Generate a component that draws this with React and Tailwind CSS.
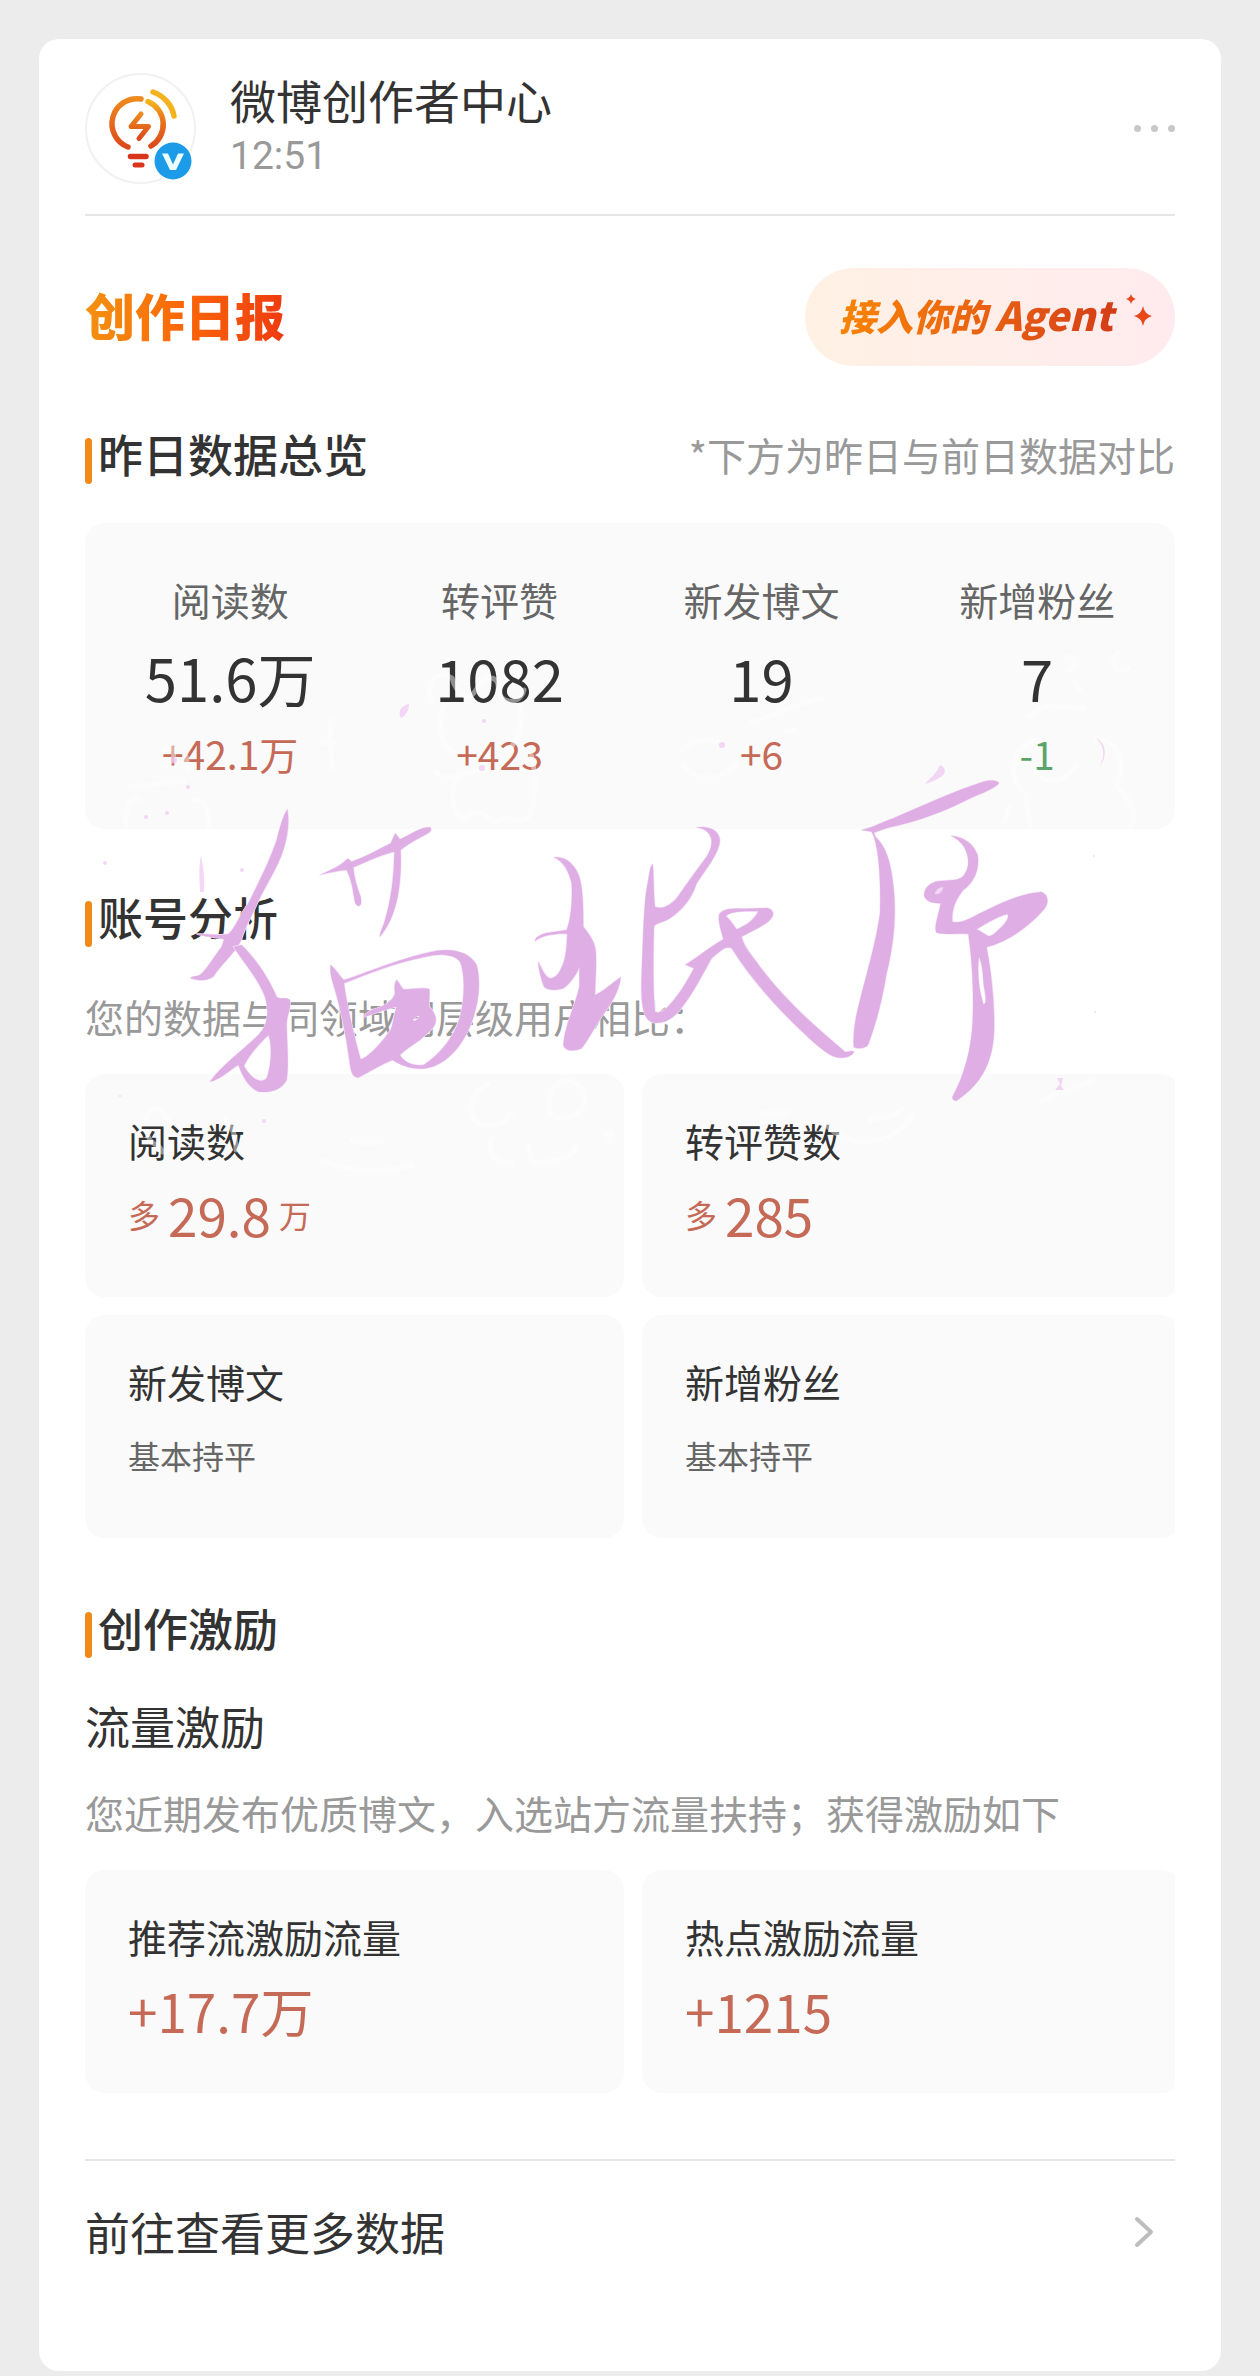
const STATS = [
  { label: "阅读数", value: "51.6万", change: "+42.1万", up: true },
  { label: "转评赞", value: "1082", change: "+423", up: true },
  { label: "新发博文", value: "19", change: "+6", up: true },
  { label: "新增粉丝", value: "7", change: "-1", up: false },
];

const COMPARISONS = [
  { label: "阅读数", prefix: "多", value: "29.8", unit: "万" },
  { label: "转评赞数", prefix: "多", value: "285" },
  { label: "新发博文", note: "基本持平" },
  { label: "新增粉丝", note: "基本持平" },
];

const REWARDS = [
  { label: "推荐流激励流量", value: "+17.7万" },
  { label: "热点激励流量", value: "+1215" },
];

function Avatar() {
  return (
    <svg viewBox="0 0 111 111" className="size-[111px] shrink-0" aria-hidden="true">
      <defs>
        <linearGradient id="bulb" x1="0" y1="0" x2="0" y2="1">
          <stop offset="0" stopColor="#ee8a1e" />
          <stop offset="1" stopColor="#dc4a1c" />
        </linearGradient>
        <linearGradient id="bulbRight" x1="0" y1="0" x2="0" y2="1">
          <stop offset="0" stopColor="#f5b41c" />
          <stop offset="0.35" stopColor="#ea7a1c" />
          <stop offset="1" stopColor="#dc4a1c" />
        </linearGradient>
      </defs>
      <circle cx="55.5" cy="55.5" r="54.5" fill="#fff" stroke="#f1f1f1" strokeWidth="2" />
      <g fill="none" strokeLinecap="round" strokeLinejoin="round">
        <path d="M56 26 A25 25 0 0 0 43 74" stroke="url(#bulb)" strokeWidth="5.5" />
        <path d="M63 28.500 A25 25 0 0 1 66 73" stroke="url(#bulbRight)" strokeWidth="5.5" />
        <path d="M68 19 C79 23 87 32 89 43" stroke="#f3b320" strokeWidth="5.5" />
        <path d="M56 41 L46 53.500 H63.500 L54 65.500" stroke="url(#bulb)" strokeWidth="5" />
        <path d="M45.500 83.500 H61" stroke="#d9341c" strokeWidth="5.5" />
        <path d="M50 92 H57" stroke="#d9341c" strokeWidth="5" />
      </g>
      <circle cx="88" cy="88" r="20.5" fill="#fff" />
      <circle cx="88" cy="88" r="18.500" fill="#1b9be8" />
      <path d="M77 80.500 H83 L88 91.500 L93 80.500 H99 L91 97 H85Z" fill="#eafcff" />
    </svg>
  );
}

function SectionHeading({ children }) {
  return (
    <div className="flex items-start gap-1.5">
      <span className="mt-3 h-[46px] w-[7px] rounded-full bg-[#f08a1a]" />
      <h2 className="text-[45px] leading-[56px] font-medium">{children}</h2>
    </div>
  );
}

function CardGrid({ children }) {
  return (
    <div className="mt-[30px] overflow-hidden">
      <div className="-mr-1.5 grid grid-cols-2 gap-[18px]">{children}</div>
    </div>
  );
}

function InfoCard({ label, prefix, value, unit, note }) {
  return (
    <div className="rounded-[20px] bg-[#fafafa] px-[43px] pt-10 pb-[35px]">
      <h3 className="text-[39px] leading-[52px]">{label}</h3>
      <p className="flex h-24 items-center gap-2 text-[32px] text-[#c66a58]">
        {prefix && <span>{prefix}</span>}
        {value && <span className="text-[53px] leading-[96px]">{value}</span>}
        {unit && <span>{unit}</span>}
        {note && <span className="text-[#666]">{note}</span>}
      </p>
    </div>
  );
}

function BrushSignature() {
  return (
    <svg
      viewBox="0 640 1260 560"
      className="pointer-events-none absolute top-[640px] left-0 w-full"
      aria-hidden="true"
    >
      {/* pale doodles */}
      <g fill="none" stroke="#fff" strokeOpacity="0.45" strokeWidth="5" strokeLinecap="round" strokeLinejoin="round">
        <path d="M432 704 C424 684 436 668 452 678 C456 692 468 704 476 690 C486 672 500 676 498 690 C500 704 520 706 524 690" />
        <path d="M444 706 C436 728 444 750 454 752 M520 706 C524 724 516 744 508 750 M436 772 C446 786 472 768 486 770 M456 776 C448 800 456 822 466 818 C478 806 488 816 494 822 C510 812 522 828 530 814 C538 796 534 760 530 752" />
        <path d="M164 750 C176 738 178 764 164 766 M186 756 L188 768 M320 744 L334 742 M330 720 L332 768" />
        <path d="M126 828 C124 808 130 796 140 800 M208 828 C212 806 200 798 192 800 M130 786 L184 782" />
        <path d="M680 752 C692 738 712 738 722 742 M684 766 C700 786 728 776 736 764 M752 722 C772 716 790 706 822 698 M786 732 L794 730" />
        <path d="M1030 716 L1044 706 L1084 708 M1034 740 C1008 752 1008 780 1026 794 L1030 826 M1032 764 C1044 790 1064 782 1076 766 M1096 738 C1124 742 1124 768 1116 786 C1136 804 1136 820 1130 828" />
        <path d="M1064 656 C1078 656 1078 668 1068 670 M1072 680 L1080 690 M1118 652 C1108 660 1116 676 1128 668 M1010 806 L1004 822" />
        <path d="M144 1120 C150 1108 158 1104 164 1114 L170 1122 M148 1136 C152 1148 160 1142 162 1152 M226 1120 C232 1128 236 1134 236 1150" />
        <path d="M322 1160 C346 1172 380 1172 412 1166 M352 1140 C360 1144 372 1144 382 1142" />
        <path d="M488 1084 C468 1094 466 1118 480 1124 C496 1128 506 1122 512 1112 M552 1090 C544 1112 550 1120 566 1118 C584 1116 590 1096 580 1086 C570 1078 560 1078 552 1090" />
        <path d="M492 1138 C486 1154 496 1164 512 1162 M528 1146 L532 1162 C552 1162 572 1160 576 1146 M608 1144 C614 1134 612 1128 606 1134" />
        <path d="M762 1112 C772 1114 782 1114 788 1112 M824 1122 C846 1152 894 1146 912 1116 M870 1120 C884 1120 894 1116 902 1108 M1042 1102 C1060 1088 1078 1090 1092 1080" />
      </g>
      {/* stray pink flecks */}
      <g fill="#eec6f0" fillOpacity="0.7">
        <path d="M401 718 C397 710 402 706 409 704 C409 710 406 716 401 718Z" />
        <path d="M201 855 C198 870 200 882 200 892 L204 892 C205 876 203 866 201 855Z" />
        <path d="M1096 738 C1108 744 1106 758 1100 766 C1104 756 1106 748 1096 738Z" />
        <path d="M1057 1078 L1063 1078 L1061 1086 L1064 1090 L1055 1090 L1060 1084Z" />
        <path d="M925 784 C930 778 936 774 940 765 C945 767 947 772 942 776 C937 780 931 782 925 784Z" />
        <circle cx="174" cy="760" r="3" />
        <circle cx="484" cy="721" r="2" />
        <circle cx="482" cy="768" r="3" />
        <circle cx="722" cy="745" r="3" />
        <circle cx="146" cy="817" r="2" />
        <circle cx="167" cy="813" r="2" />
        <circle cx="188" cy="787" r="2" />
        <circle cx="105" cy="863" r="2" />
        <circle cx="242" cy="870" r="2" />
        <circle cx="1094" cy="856" r="1" />
        <circle cx="1095" cy="1012" r="1" />
        <circle cx="264" cy="1121" r="2" />
        <circle cx="120" cy="1096" r="1" />
      </g>
      {/* brush strokes */}
      <g fill="#dfaee5" fillRule="evenodd" stroke="#f6e4f8" strokeWidth="4" paintOrder="stroke" strokeLinejoin="round">
        <g transform="translate(170 780) scale(0.33333)">
          <path d="M352 88 C360 130 350 180 340 210 C325 260 290 310 262 370 C245 410 225 440 214 480 C195 520 160 545 130 590 C110 603 85 603 62 595 C60 590 75 590 88 586 C110 570 125 540 155 500 L162 478 C130 470 100 470 80 462 C110 460 150 468 175 462 C200 440 210 400 235 370 C270 300 300 240 320 180 C330 140 340 105 352 88Z" />
          <path d="M190 500 C230 560 260 590 285 650 C300 700 290 740 265 765 C220 810 160 850 120 905 C150 900 180 870 205 855 C215 880 230 920 265 935 C300 940 335 930 350 900 C358 850 350 780 350 730 C352 700 365 680 360 660 C350 650 330 660 320 650 C290 580 250 530 215 495Z M222 858 C240 820 270 790 295 765 C306 790 306 850 290 895 C270 915 240 890 222 858Z" />
          <path d="M450 285 C480 270 510 260 528 240 L535 236 L545 245 C590 230 630 205 662 190 L676 160 L690 178 C720 165 750 140 780 142 C788 150 780 158 765 165 C740 178 710 195 692 210 C694 250 692 300 685 340 C675 400 655 440 630 470 C628 460 640 440 645 420 C660 370 672 300 673 215 C630 225 580 250 550 262 C552 290 560 320 572 350 C576 370 572 378 565 378 C555 375 553 360 552 350 C548 320 540 290 530 270 C500 272 470 280 450 285Z" />
          <path d="M482 555 C500 570 510 590 522 600 C600 575 700 530 800 512 C860 505 900 520 920 555 C935 610 925 680 900 740 C870 810 820 860 760 866 C720 868 690 855 668 840 C640 850 600 875 565 893 C545 893 542 870 538 840 C530 780 515 700 495 630 C485 600 478 575 482 555Z M522 610 C530 670 550 760 572 838 C600 830 640 780 662 750 C670 730 672 700 680 680 C640 690 600 705 580 712 C585 700 600 690 620 685 C650 675 670 660 675 640 C672 620 675 605 680 600 C690 610 692 620 700 628 C730 628 760 620 778 628 C780 650 775 670 778 680 C790 690 800 710 797 725 C795 745 770 760 750 780 C720 800 700 815 690 825 C700 845 730 860 760 855 C800 830 850 780 870 710 C885 650 885 580 870 545 C850 520 800 520 760 532 C670 550 600 580 522 610Z M728 722 C732 712 742 708 748 708 C744 718 738 724 728 722Z" />
          <path d="M1152 232 C1190 228 1215 255 1228 290 C1240 330 1240 390 1240 440 C1260 465 1280 490 1278 530 C1280 570 1275 610 1275 645 C1300 635 1325 610 1352 592 C1350 630 1320 680 1295 710 C1275 740 1255 780 1235 805 C1215 815 1185 815 1180 795 C1182 740 1215 680 1228 620 L1228 560 C1218 590 1195 615 1180 625 C1160 632 1135 632 1122 620 C1115 600 1105 570 1105 545 C1115 565 1125 590 1140 595 C1160 595 1170 575 1180 550 C1190 520 1190 490 1192 462 C1160 460 1120 465 1095 483 C1095 470 1120 458 1150 456 L1190 450 C1205 410 1207 350 1205 310 C1195 270 1180 245 1152 232Z" />
        </g>
        <g transform="translate(600 740) scale(0.33333)">
          <path d="M158 372 C162 400 160 460 165 500 C190 510 210 495 230 475 C260 430 290 390 320 350 C345 310 340 270 290 262 C320 258 355 265 360 300 C358 340 320 385 290 430 C275 480 240 515 210 535 C190 548 165 550 162 560 C160 640 158 740 165 815 C185 825 205 800 225 775 C250 745 265 715 282 685 L256 674 C290 655 330 620 370 598 C365 575 352 545 358 522 C370 505 400 505 430 506 L500 504 C522 508 525 525 510 540 C490 560 450 575 425 590 C430 620 460 650 480 680 C540 760 620 840 735 935 C745 938 755 930 762 935 C758 948 735 955 715 953 C690 950 670 930 650 915 C560 835 460 730 395 625 C375 615 355 640 335 655 C310 700 280 760 240 810 C215 840 190 852 160 848 C125 840 122 780 125 700 C130 600 130 480 145 420 C148 400 150 380 158 372Z M378 528 C390 515 430 512 475 514 C460 545 430 560 410 568 C400 555 392 540 378 528Z" />
          <path d="M785 270 C820 262 850 245 880 235 C970 195 1070 150 1150 125 C1175 118 1195 122 1197 130 C1180 150 1130 165 1090 185 C1030 215 960 240 900 255 C860 262 840 272 822 278 L826 290 C860 320 872 370 878 420 C890 500 885 600 860 700 C845 790 825 860 805 912 C800 925 775 928 762 922 C758 890 765 840 775 800 C800 700 830 600 840 520 C842 440 840 350 822 290 L815 275Z" />
          <path d="M1053 287 C1090 290 1120 310 1133 345 C1140 390 1120 430 1090 450 C1065 480 1055 510 1057 545 C1085 552 1110 535 1140 520 C1200 490 1260 460 1325 456 C1345 465 1347 485 1335 505 C1300 545 1240 600 1160 622 C1175 700 1185 800 1182 880 C1178 960 1150 1030 1070 1082 C1058 1082 1054 1075 1060 1065 C1090 1010 1115 930 1118 840 C1122 750 1115 650 1105 582 C1075 580 1040 585 1010 578 C1000 565 1015 530 1022 490 C1000 490 975 485 972 465 C975 435 1000 422 1030 422 C1060 420 1085 422 1095 400 C1115 370 1105 310 1053 287Z M1130 568 C1160 550 1190 530 1222 522 C1228 530 1220 545 1205 560 C1190 575 1175 590 1165 588 C1150 580 1145 575 1130 568Z M1137 650 C1132 690 1134 740 1150 792 C1160 796 1158 770 1152 740 C1148 710 1150 680 1137 650Z" />
          <path d="M1004 462 C1008 448 1020 440 1030 442 C1028 456 1016 466 1004 462Z" fill="#f0d8f3" stroke="none" />
        </g>
      </g>
    </svg>
  );
}

export default function App() {
  return (
    <div className="relative bg-[#ececec] px-[39px] pt-[39px] pb-[5px] font-['Noto_Sans_CJK_SC',sans-serif] text-[#333]">
      <main className="rounded-[20px] bg-white px-[46px] pt-8">
        <header className="flex items-center gap-[34px] border-b-2 border-[#e6e6e6] pb-[29px]">
          <Avatar />
          <div className="flex-1">
            <h1 className="text-[46px] leading-[56px]">微博创作者中心</h1>
            <time className="block font-[Roboto,sans-serif] text-[39px] leading-[58px] text-[#999]">12:51</time>
          </div>
          <button type="button" aria-label="更多" className="flex gap-2.5 py-4">
            <span className="size-[7px] rounded-full bg-[#c8c8c8]" />
            <span className="size-[7px] rounded-full bg-[#c8c8c8]" />
            <span className="size-[7px] rounded-full bg-[#c8c8c8]" />
          </button>
        </header>

        <div className="mt-[52px] flex items-center justify-between">
          <h2 className="bg-linear-to-r from-[#f29110] via-[#fb6508] to-[#ee3a10] bg-clip-text pb-1.5 text-[50px] leading-[64px] font-black text-transparent">
            创作日报
          </h2>
          <button
            type="button"
            className="flex h-[98px] items-center rounded-full bg-linear-to-r from-[#fff1e4] to-[#ffebef] pr-[22px] pl-[34px]"
          >
            <span className="flex items-baseline gap-2 bg-linear-to-r from-[#f88404] via-[#ea6210] to-[#d23a18] bg-clip-text pr-2.5 pb-1.5 text-[37px] leading-[56px] font-black text-transparent italic">
              <span>接入你的</span>
              <span className="text-[40px]">Agent</span>
            </span>
            <svg viewBox="0 3 30 48" className="h-12 w-[30px]" fill="#e8481a" aria-hidden="true">
              <path d="M8 4 Q9 8 13 9 Q9 10 8 14 Q7 10 3 9 Q7 8 8 4Z" />
              <path d="M20 16 Q21.500 24 29 26 Q21.500 28 20 36 Q18.500 28 11 26 Q18.500 24 20 16Z" />
            </svg>
          </button>
        </div>

        <section className="mt-[60px]">
          <div className="flex items-start justify-between">
            <SectionHeading>昨日数据总览</SectionHeading>
            <p className="text-[39px] leading-[56px] text-[#999]">*下方为昨日与前日数据对比</p>
          </div>
          <div className="mt-[39px] flex justify-around rounded-[20px] bg-[#fafafa] pt-12 pb-[50px] text-center">
            {STATS.map((s) => (
              <div key={s.label}>
                <p className="text-[39px] leading-[56px] text-[#666]">{s.label}</p>
                <p className="text-[58px] leading-[100px]">{s.value}</p>
                <p className={s.up ? "text-[39px] leading-[52px] text-[#c66a58]" : "text-[39px] leading-[52px] text-[#5aa469]"}>
                  {s.change}
                </p>
              </div>
            ))}
          </div>
        </section>

        <section className="mt-[60px]">
          <SectionHeading>账号分析</SectionHeading>
          <p className="mt-[41px] text-[39px] leading-[56px] text-[#999]">您的数据与同领域同层级用户相比：</p>
          <CardGrid>
            {COMPARISONS.map((c) => (
              <InfoCard key={c.label} {...c} />
            ))}
          </CardGrid>
        </section>

        <section className="mt-[62px]">
          <SectionHeading>创作激励</SectionHeading>
          <h3 className="mt-10 text-[45px] leading-[56px]">流量激励</h3>
          <p className="mt-[30px] text-[39px] leading-[56px] text-[#999]">您近期发布优质博文，入选站方流量扶持；获得激励如下</p>
          <CardGrid>
            {REWARDS.map((r) => (
              <InfoCard key={r.label} {...r} />
            ))}
          </CardGrid>
        </section>

        <footer className="mt-[66px] border-t-2 border-[#e6e6e6] pb-[69px]">
          <a href="#more" className="flex h-[141px] items-center justify-between pr-5 text-[45px] leading-[56px]">
            前往查看更多数据
            <svg viewBox="0 0 22 34" className="h-[34px] w-[22px]" fill="none" stroke="#bdbdbd" strokeWidth="4" strokeLinecap="round" strokeLinejoin="round" aria-hidden="true">
              <path d="M4 4 L18 17 L4 30" />
            </svg>
          </a>
        </footer>
      </main>
      <BrushSignature />
    </div>
  );
}
